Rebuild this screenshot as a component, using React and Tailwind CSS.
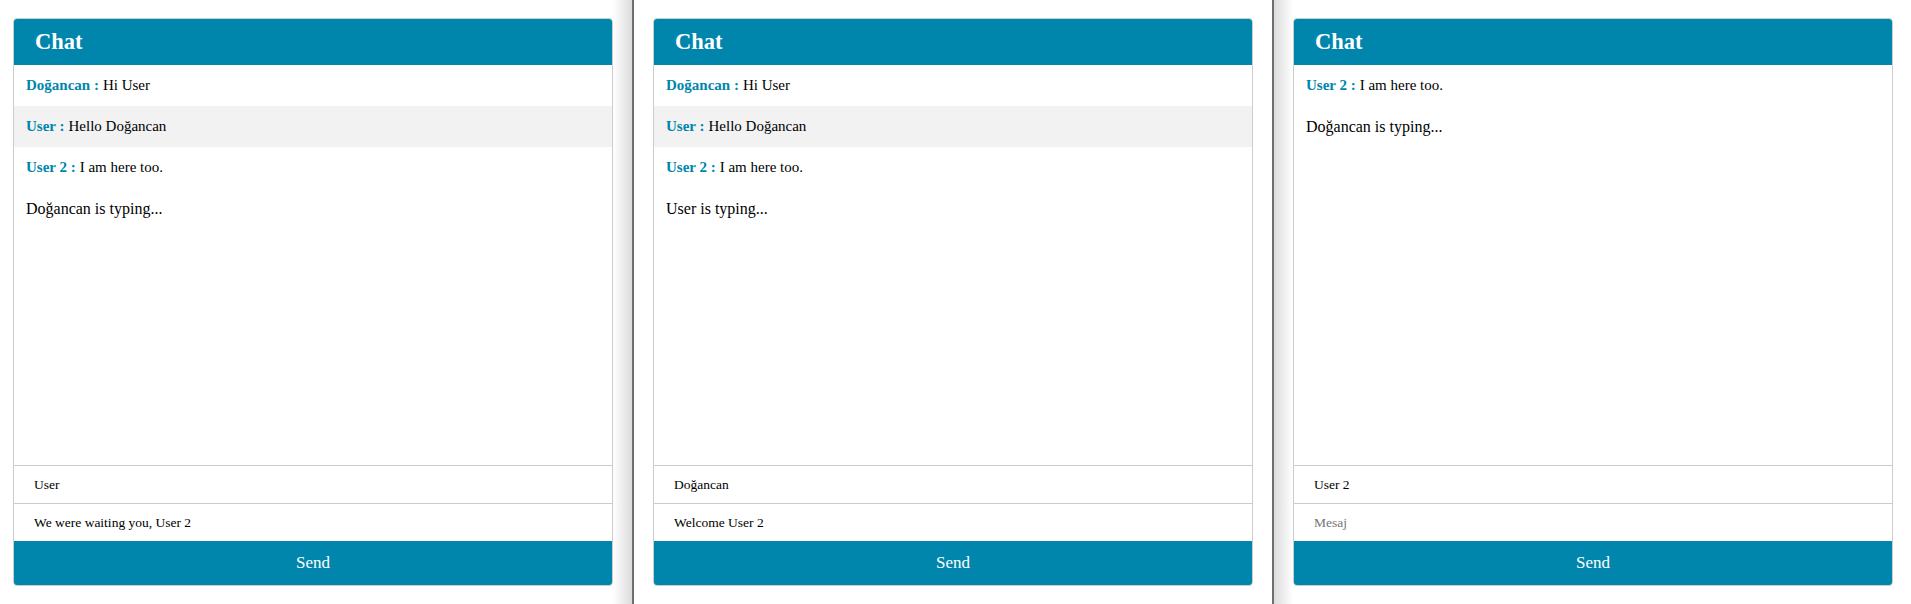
import React from 'react'

const SERIF = "font-['Liberation_Serif','Times_New_Roman',serif]"

const WINDOWS = [
  {
    messages: [
      { name: 'Doğancan', text: 'Hi User' },
      { name: 'User', text: 'Hello Doğancan' },
      { name: 'User 2', text: 'I am here too.' },
    ],
    typing: 'Doğancan is typing...',
    handle: 'User',
    message: 'We were waiting you, User 2',
  },
  {
    messages: [
      { name: 'Doğancan', text: 'Hi User' },
      { name: 'User', text: 'Hello Doğancan' },
      { name: 'User 2', text: 'I am here too.' },
    ],
    typing: 'User is typing...',
    handle: 'Doğancan',
    message: 'Welcome User 2',
  },
  {
    messages: [{ name: 'User 2', text: 'I am here too.' }],
    typing: 'Doğancan is typing...',
    handle: 'User 2',
    message: '',
  },
]

function ChatCard({ data }) {
  return (
    <div className={`w-[600px] h-[568px] border border-[#cccccc] rounded-[4px] overflow-hidden flex flex-col bg-white ${SERIF}`}>
      <div className="h-[46px] shrink-0 bg-[#0086ad] flex items-center px-[21px]">
        <h2 className="text-white font-bold text-[22.5px] leading-none">Chat</h2>
      </div>

      <div className="h-[400px] shrink-0 overflow-hidden">
        {data.messages.map((m, i) => (
          <div
            key={i}
            className={`h-[41px] flex items-center px-[12px] text-[15px] text-black ${i % 2 === 1 ? 'bg-[#f2f2f2]' : 'bg-white'}`}
          >
            <strong className="text-[#0086ad] font-bold">{m.name} :</strong>
            <span className="ml-[4px]">{m.text}</span>
          </div>
        ))}
        <p className="h-[41px] flex items-center px-[12px] text-[16px] text-black">{data.typing}</p>
      </div>

      <input
        readOnly
        value={data.handle}
        className={`h-[38px] shrink-0 border-t border-[#cccccc] px-[20px] text-[13.5px] text-black outline-none ${SERIF}`}
      />
      <input
        readOnly
        value={data.message}
        placeholder="Mesaj"
        className={`h-[38px] shrink-0 border-t border-[#cccccc] px-[20px] text-[13.5px] text-black placeholder:text-[#757575] outline-none ${SERIF}`}
      />
      <button className={`flex-1 bg-[#0086ad] text-white text-[17px] ${SERIF}`}>Send</button>
    </div>
  )
}

export default function App() {
  return (
    <div className="w-[1911px] h-[604px] flex bg-white overflow-hidden">
      <div className="w-[632px] shrink-0 flex pt-[18px] pl-[13px]">
        <ChatCard data={WINDOWS[0]} />
        <div className="w-[19px] -mt-[18px] bg-gradient-to-r from-white to-[#dcdcdc]" />
      </div>
      <div className="w-[2px] shrink-0 bg-[#6f6f6f]" />

      <div className="w-[638px] shrink-0 flex pt-[18px] pl-[19px]">
        <ChatCard data={WINDOWS[1]} />
      </div>
      <div className="w-[2px] shrink-0 bg-[#6f6f6f]" />

      <div className="flex-1 flex pt-[18px]">
        <div className="w-[19px] -mt-[18px] bg-gradient-to-r from-[#dcdcdc] to-white" />
        <ChatCard data={WINDOWS[2]} />
      </div>
    </div>
  )
}
